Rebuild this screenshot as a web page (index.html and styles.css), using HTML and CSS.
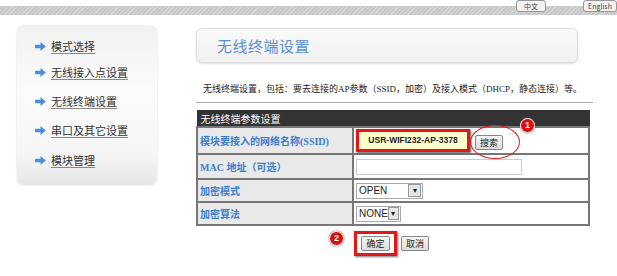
FILE: index.html
```html
<!DOCTYPE html>
<html lang="zh-CN">
<head>
  <meta charset="UTF-8">
  <title>无线终端设置</title>
  <link rel="stylesheet" href="styles.css">
</head>
<body>
  <div class="topbar">
    <span class="topbtn btn-a">中文</span>
    <span class="topbtn btn-b">English</span>
  </div>

  <div class="layout">
    <div class="sidebar">
      <a class="nav-item" href="#"><svg class="arrow" viewBox="0 0 12 10"><polygon points="0,3 6,3 6,0 12,5 6,10 6,7 0,7" fill="#4d8ee0"/></svg>模式选择</a>
      <a class="nav-item" href="#"><svg class="arrow" viewBox="0 0 12 10"><polygon points="0,3 6,3 6,0 12,5 6,10 6,7 0,7" fill="#4d8ee0"/></svg>无线接入点设置</a>
      <a class="nav-item" href="#"><svg class="arrow" viewBox="0 0 12 10"><polygon points="0,3 6,3 6,0 12,5 6,10 6,7 0,7" fill="#4d8ee0"/></svg>无线终端设置</a>
      <a class="nav-item" href="#"><svg class="arrow" viewBox="0 0 12 10"><polygon points="0,3 6,3 6,0 12,5 6,10 6,7 0,7" fill="#4d8ee0"/></svg>串口及其它设置</a>
      <a class="nav-item" href="#"><svg class="arrow" viewBox="0 0 12 10"><polygon points="0,3 6,3 6,0 12,5 6,10 6,7 0,7" fill="#4d8ee0"/></svg>模块管理</a>
    </div>

    <div class="content">
      <div class="title-card">无线终端设置</div>
      <p class="desc">无线终端设置，包括：要去连接的AP参数（SSID，加密）及接入模式（DHCP，静态连接）等。</p>
      <div class="rule"></div>

      <table class="params">
        <tr><th colspan="2">无线终端参数设置</th></tr>
        <tr class="row-ssid">
          <td class="label">模块要接入的网络名称(SSID)</td>
          <td class="value">
            <div class="ssid-wrap">
              <span class="ssid-box">USR-WIFI232-AP-3378</span>
              <span class="search-wrap"><button class="btn">搜索</button></span>
              <span class="badge badge-1">1</span>
            </div>
          </td>
        </tr>
        <tr class="row-mac">
          <td class="label">MAC 地址（可选）</td>
          <td class="value"><input class="mac-input" type="text"></td>
        </tr>
        <tr class="row-sel">
          <td class="label">加密模式</td>
          <td class="value"><span class="select sel-open">OPEN<span class="drop">▾</span></span></td>
        </tr>
        <tr class="row-sel">
          <td class="label">加密算法</td>
          <td class="value"><span class="select sel-none">NONE<span class="drop">▾</span></span></td>
        </tr>
      </table>

      <div class="actions">
        <span class="badge badge-2">2</span>
        <span class="ok-wrap"><button class="btn">确定</button></span>
        <button class="btn">取消</button>
      </div>
    </div>
  </div>
</body>
</html>
```

FILE: styles.css
```css
body {
  margin: 0;
  background: #fff;
  font-family: "Noto Sans CJK SC", "DejaVu Sans", sans-serif;
  color: #333;
  width: 617px;
  height: 276px;
  overflow: hidden;
}
.topbar {
  position: relative;
  height: 9px;
  margin-top: 6px;
  background: repeating-linear-gradient(135deg, #d6d6d6 0, #d6d6d6 1px, #c8c8c8 1px, #c8c8c8 3px);
}
.topbtn {
  position: absolute;
  top: -6px;
  height: 10px;
  border: 1px solid #999;
  border-radius: 3px;
  background: #f2f2f2;
  font-size: 7px;
  line-height: 10px;
  color: #444;
  text-align: center;
  overflow: hidden;
}
.btn-a { left: 516px; width: 28px; }
.btn-b { left: 583px; width: 32px; }

.layout {
  display: flex;
  padding: 11px 0 0 17px;
}
.sidebar {
  width: 140px;
  height: 159px;
  box-sizing: border-box;
  padding: 11px 0 0 18px;
  border-radius: 7px;
  background: linear-gradient(#f1f1f1, #fbfbfb 40%, #f6f6f6 80%, #e6e6e6);
  box-shadow: 0 0 2px #ccc;
  display: flex;
  flex-direction: column;
}
.nav-item {
  display: flex;
  align-items: center;
  height: 18px;
  margin-bottom: 11px;
  font-size: 11px;
  color: #333;
  text-decoration: underline;
  text-decoration-color: #888;
  text-underline-offset: 2px;
}
.nav-item:first-child { margin-bottom: 8px; }
.nav-item:nth-child(4) { margin-bottom: 12px; }
.arrow {
  width: 11px;
  height: 9px;
  margin-right: 5px;
}

.content {
  margin-left: 39px;
  width: 398px;
}
.title-card {
  width: 382px;
  height: 35px;
  margin-top: 2px;
  box-sizing: border-box;
  padding-left: 20px;
  border: 1px solid #ddd;
  border-radius: 6px;
  background: linear-gradient(#fafafa, #f0f0f0);
  box-shadow: 0 1px 2px #ddd;
  font-size: 15px;
  line-height: 33px;
  color: #5b8fd2;
  letter-spacing: 0.5px;
}
.desc {
  margin: 19px 0 0 7px;
  font-size: 9px;
  line-height: 14px;
  color: #222;
  white-space: nowrap;
  font-family: "Liberation Serif", "Noto Sans CJK SC", serif;
}
.rule {
  height: 1px;
  margin-top: 6px;
  background: #aaa;
  width: 397px;
}

.params {
  margin-top: 7px;
  width: 394px;
  border-collapse: collapse;
  font-size: 10px;
}
.params th {
  height: 15px;
  padding: 0 3px;
  background: #333;
  color: #fff;
  text-align: left;
  font-weight: normal;
  border: 1px solid #333;
}
.params td {
  border: 2px solid #777;
  padding: 0 2px;
}
.params td.label {
  width: 150px;
  background: #e9e9e9;
  color: #3b7dce;
  font-weight: bold;
  font-family: "Liberation Serif", "Noto Sans CJK SC", serif;
}
.params td.value {
  background: #fff;
}
.row-ssid td { height: 23px; }
.row-mac td { height: 23px; }
.row-sel td { height: 21px; }

.ssid-wrap {
  position: relative;
  display: flex;
  align-items: center;
}
.ssid-box {
  width: 108px;
  height: 17px;
  border: 3px solid #e01818;
  background: #ffffcc;
  box-shadow: 1px 1px 2px #555;
  font-family: "Liberation Sans", sans-serif;
  font-weight: bold;
  font-size: 8.5px;
  line-height: 17px;
  text-align: center;
  color: #222;
}
.search-wrap {
  margin-left: 0;
  width: 50px;
  height: 34px;
  border: 1.5px solid #e02020;
  border-radius: 50%;
  display: flex;
  align-items: center;
  padding-left: 4px;
  box-sizing: border-box;
  margin-top: -3px;
  margin-bottom: -6px;
}
.btn {
  height: 15px;
  padding: 0 4px;
  border: 1px solid #888;
  border-radius: 2px;
  background: linear-gradient(#f6f6f6, #dcdcdc);
  font-family: "Noto Sans CJK SC", sans-serif;
  font-size: 9px;
  line-height: 13px;
  color: #222;
}
.badge {
  position: absolute;
  width: 13px;
  height: 13px;
  border-radius: 50%;
  background: #d81010;
  border: 1.5px solid #fff;
  box-shadow: 0 0 2px #555;
  color: #fff;
  font-family: "Liberation Sans", sans-serif;
  font-weight: bold;
  font-size: 9px;
  line-height: 13px;
  text-align: center;
}
.badge-1 { left: 164px; top: -10px; }
.mac-input {
  display: block;
  width: 166px;
  height: 16px;
  box-sizing: border-box;
  border: 1px solid #ccc;
  margin: 0;
}
.select {
  display: inline-flex;
  align-items: center;
  justify-content: space-between;
  height: 16px;
  box-sizing: border-box;
  border: 1px solid #aaa;
  padding-left: 2px;
  font-family: "Liberation Sans", sans-serif;
  font-size: 10px;
  color: #222;
}
.sel-open { width: 67px; }
.sel-none { width: 45px; }
.drop {
  width: 11px;
  height: 11px;
  margin-right: 1px;
  border: 1px solid #999;
  background: #e6e6e6;
  font-size: 8px;
  line-height: 11px;
  text-align: center;
}

.actions {
  position: relative;
  display: flex;
  align-items: center;
  margin-top: 5px;
  padding-left: 158px;
}
.badge-2 { left: 133px; top: 0; }
.ok-wrap {
  display: flex;
  align-items: center;
  justify-content: center;
  width: 43px;
  height: 25px;
  box-sizing: border-box;
  border: 3px solid #e01818;
  box-shadow: 1px 1px 2px #777;
  margin-right: 4px;
}
```
